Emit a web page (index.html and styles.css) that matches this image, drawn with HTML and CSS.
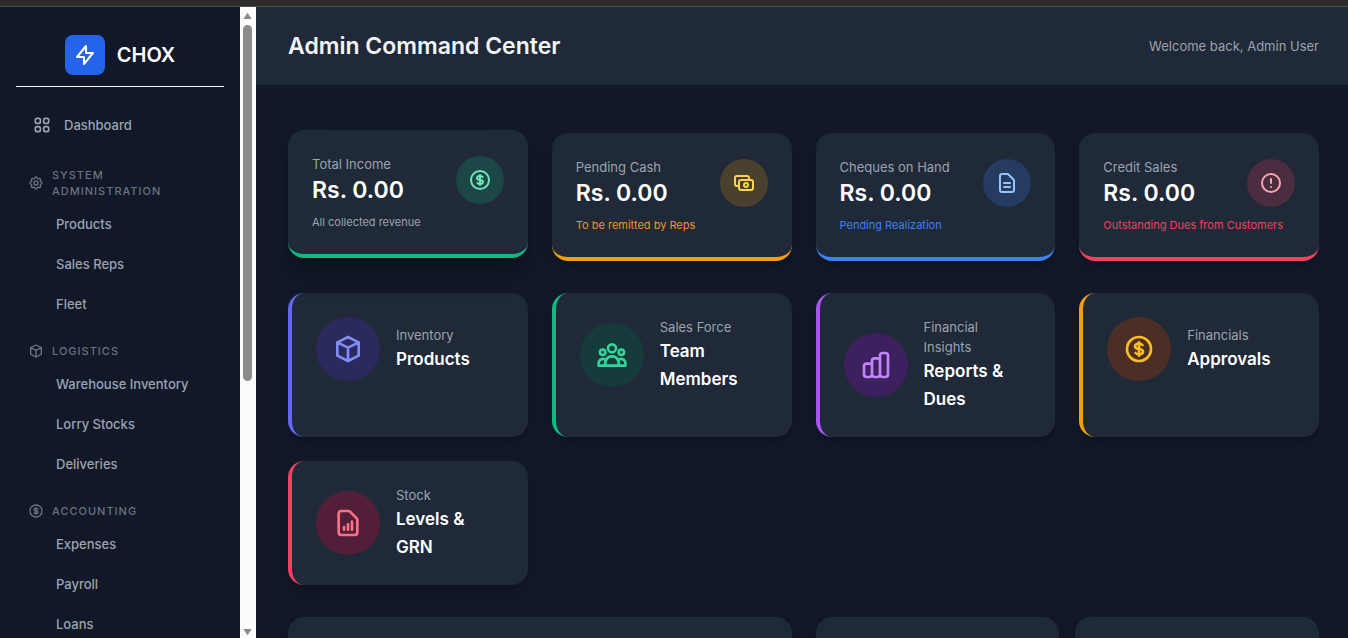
FILE: index.html
```html
<!DOCTYPE html>
<html lang="en">
<head>
<meta charset="utf-8">
<meta name="viewport" content="width=device-width, initial-scale=1">
<title>Admin Command Center</title>
<link rel="stylesheet" href="styles.css">
</head>
<body>
<svg class="sprite" aria-hidden="true">
  <symbol id="bolt" viewBox="0 0 24 24"><path d="M13 10V3L4 14h7v7l9-11h-7z"/></symbol>
  <symbol id="grid" viewBox="0 0 24 24"><rect x="4" y="4" width="6" height="6" rx="2"/><rect x="14" y="4" width="6" height="6" rx="2"/><rect x="4" y="14" width="6" height="6" rx="2"/><rect x="14" y="14" width="6" height="6" rx="2"/></symbol>
  <symbol id="cog" viewBox="0 0 24 24"><path d="M10.325 4.317c.426-1.756 2.924-1.756 3.35 0a1.724 1.724 0 002.573 1.066c1.543-.94 3.31.826 2.37 2.37a1.724 1.724 0 001.065 2.572c1.756.426 1.756 2.924 0 3.35a1.724 1.724 0 00-1.066 2.573c.94 1.543-.826 3.31-2.37 2.37a1.724 1.724 0 00-2.572 1.065c-.426 1.756-2.924 1.756-3.35 0a1.724 1.724 0 00-2.573-1.066c-1.543.94-3.31-.826-2.37-2.37a1.724 1.724 0 00-1.065-2.572c-1.756-.426-1.756-2.924 0-3.35a1.724 1.724 0 001.066-2.573c-.94-1.543.826-3.31 2.37-2.37.996.608 2.296.07 2.572-1.065z"/><circle cx="12" cy="12" r="3"/></symbol>
  <symbol id="cube" viewBox="0 0 24 24"><path d="M20 7l-8-4-8 4m16 0l-8 4m8-4v10l-8 4m0-10L4 7m8 4v10M4 7v10l8 4"/></symbol>
  <symbol id="dollar" viewBox="0 0 24 24"><path d="M12 8c-1.657 0-3 .895-3 2s1.343 2 3 2 3 .895 3 2-1.343 2-3 2m0-8c1.11 0 2.08.402 2.599 1M12 8V7m0 1v8m0 0v1m0-1c-1.11 0-2.08-.402-2.599-1M21 12a9 9 0 11-18 0 9 9 0 0118 0z"/></symbol>
  <symbol id="cash" viewBox="0 0 24 24"><path d="M17 9V7a2 2 0 00-2-2H5a2 2 0 00-2 2v6a2 2 0 002 2h2m2 4h10a2 2 0 002-2v-6a2 2 0 00-2-2H9a2 2 0 00-2 2v6a2 2 0 002 2zm7-5a2 2 0 11-4 0 2 2 0 014 0z"/></symbol>
  <symbol id="document" viewBox="0 0 24 24"><path d="M9 12h6m-6 4h6m2 5H7a2 2 0 01-2-2V5a2 2 0 012-2h5.586a1 1 0 01.707.293l5.414 5.414a1 1 0 01.293.707V19a2 2 0 01-2 2z"/></symbol>
  <symbol id="alert" viewBox="0 0 24 24"><path d="M12 8v4m0 4h.01M21 12a9 9 0 11-18 0 9 9 0 0118 0z"/></symbol>
  <symbol id="team" viewBox="0 0 24 24"><path d="M17 20h5v-2a3 3 0 00-5.356-1.857M17 20H7m10 0v-2c0-.656-.126-1.283-.356-1.857M7 20H2v-2a3 3 0 015.356-1.857M7 20v-2c0-.656.126-1.283.356-1.857m0 0a5.002 5.002 0 019.288 0M15 7a3 3 0 11-6 0 3 3 0 016 0zm6 3a2 2 0 11-4 0 2 2 0 014 0zM7 10a2 2 0 11-4 0 2 2 0 014 0z"/></symbol>
  <symbol id="bars" viewBox="0 0 24 24"><path d="M9 19v-6a2 2 0 00-2-2H5a2 2 0 00-2 2v6a2 2 0 002 2h2a2 2 0 002-2zm0 0V9a2 2 0 012-2h2a2 2 0 012 2v10m-6 0a2 2 0 002 2h2a2 2 0 002-2m0 0V5a2 2 0 012-2h2a2 2 0 012 2v14a2 2 0 01-2 2h-2a2 2 0 01-2-2z"/></symbol>
  <symbol id="report" viewBox="0 0 24 24"><path d="M9 17v-2m3 2v-4m3 4v-6m2 10H7a2 2 0 01-2-2V5a2 2 0 012-2h5.586a1 1 0 01.707.293l5.414 5.414a1 1 0 01.293.707V19a2 2 0 01-2 2z"/></symbol>
</svg>
<div class="window-edge"></div>
<div class="app">
  <aside class="sidebar">
    <div class="sidebar-content">
      <a class="brand" href="#"><span class="brand-mark"><svg class="icon icon-md"><use href="#bolt"/></svg></span><span>CHOX</span></a>
      <nav class="nav">
        <a class="nav-link nav-home" href="#"><svg class="icon icon-sm"><use href="#grid"/></svg>Dashboard</a>
        <section class="nav-group">
          <h2 class="nav-title"><svg class="icon icon-xs"><use href="#cog"/></svg><span>System Administration</span></h2>
          <a class="nav-link" href="#">Products</a>
          <a class="nav-link" href="#">Sales Reps</a>
          <a class="nav-link" href="#">Fleet</a>
        </section>
        <section class="nav-group">
          <h2 class="nav-title"><svg class="icon icon-xs"><use href="#cube"/></svg><span>Logistics</span></h2>
          <a class="nav-link" href="#">Warehouse Inventory</a>
          <a class="nav-link" href="#">Lorry Stocks</a>
          <a class="nav-link" href="#">Deliveries</a>
        </section>
        <section class="nav-group">
          <h2 class="nav-title"><svg class="icon icon-xs"><use href="#dollar"/></svg><span>Accounting</span></h2>
          <a class="nav-link" href="#">Expenses</a>
          <a class="nav-link" href="#">Payroll</a>
          <a class="nav-link" href="#">Loans</a>
        </section>
      </nav>
    </div>
    <div class="scrollbar" aria-hidden="true">
      <svg class="scroll-arrow" viewBox="0 0 9 8"><path d="M1 6.500h7L4.500 1.500z"/></svg>
      <div class="scroll-track"><div class="scroll-thumb"></div></div>
      <svg class="scroll-arrow" viewBox="0 0 9 8"><path d="M1 1.500h7L4.500 6.500z"/></svg>
    </div>
  </aside>
  <main class="main">
    <header class="page-header">
      <h1 class="page-title">Admin Command Center</h1>
      <p class="welcome">Welcome back, Admin User</p>
    </header>
    <div class="content">
      <section class="cards">
        <article class="card stat green raised">
          <div class="stat-row"><div><p class="label">Total Income</p><p class="amount">Rs. 0.00</p></div><span class="badge"><svg class="icon icon-md"><use href="#dollar"/></svg></span></div>
          <p class="note">All collected revenue</p>
        </article>
        <article class="card stat amber">
          <div class="stat-row"><div><p class="label">Pending Cash</p><p class="amount">Rs. 0.00</p></div><span class="badge"><svg class="icon icon-md"><use href="#cash"/></svg></span></div>
          <p class="note">To be remitted by Reps</p>
        </article>
        <article class="card stat blue">
          <div class="stat-row"><div><p class="label">Cheques on Hand</p><p class="amount">Rs. 0.00</p></div><span class="badge"><svg class="icon icon-md"><use href="#document"/></svg></span></div>
          <p class="note">Pending Realization</p>
        </article>
        <article class="card stat rose">
          <div class="stat-row"><div><p class="label">Credit Sales</p><p class="amount">Rs. 0.00</p></div><span class="badge"><svg class="icon icon-md"><use href="#alert"/></svg></span></div>
          <p class="note">Outstanding Dues from Customers</p>
        </article>
      </section>
      <section class="cards">
        <a class="card link indigo-link" href="#"><span class="link-row"><span class="badge badge-lg"><svg class="icon icon-lg"><use href="#cube"/></svg></span><span class="link-text"><span class="label">Inventory</span><span class="link-name">Products</span></span></span></a>
        <a class="card link green-link" href="#"><span class="link-row"><span class="badge badge-lg"><svg class="icon icon-lg"><use href="#team"/></svg></span><span class="link-text"><span class="label">Sales Force</span><span class="link-name">Team Members</span></span></span></a>
        <a class="card link purple-link" href="#"><span class="link-row"><span class="badge badge-lg"><svg class="icon icon-lg"><use href="#bars"/></svg></span><span class="link-text"><span class="label">Financial Insights</span><span class="link-name">Reports &amp; Dues</span></span></span></a>
        <a class="card link amber-link" href="#"><span class="link-row"><span class="badge badge-lg"><svg class="icon icon-lg"><use href="#dollar"/></svg></span><span class="link-text"><span class="label">Financials</span><span class="link-name">Approvals</span></span></span></a>
        <a class="card link rose-link" href="#"><span class="link-row"><span class="badge badge-lg"><svg class="icon icon-lg"><use href="#report"/></svg></span><span class="link-text"><span class="label">Stock</span><span class="link-name">Levels &amp; GRN</span></span></span></a>
      </section>
      <section class="panels">
        <div class="card panel"></div>
        <div class="panel-pair"><div class="card panel"></div><div class="card panel"></div></div>
      </section>
    </div>
  </main>
</div>
</body>
</html>
```
FILE: styles.css
```css
* { box-sizing: border-box; }
body {
  margin: 0;
  height: 100vh;
  display: flex;
  flex-direction: column;
  overflow: hidden;
  background: #111827;
  color: #fff;
  font: 400 13px/20px Inter, "Open Sans", sans-serif;
}
h1, h2, p { margin: 0; }
a { color: inherit; text-decoration: none; }
.sprite { display: none; }
.icon { flex: none; fill: none; stroke: currentColor; stroke-width: 2; stroke-linecap: round; stroke-linejoin: round; }
.icon-xs { width: 16px; height: 16px; }
.icon-sm { width: 20px; height: 20px; }
.icon-md { width: 24px; height: 24px; }
.icon-lg { width: 32px; height: 32px; }

.window-edge { flex: none; height: 7px; background: #2d2c2b; border-bottom: 1px solid #4d4d4d; }
.app { flex: 1; min-height: 0; display: flex; }

.sidebar { flex: none; width: 256px; display: flex; overflow: hidden; }
.sidebar-content { flex: 1; overflow: hidden; padding: 0 16px; }
.brand {
  display: flex; align-items: center; justify-content: center; gap: 12px;
  padding: 28px 0 11px;
  border-bottom: 1px solid #f3f4f6;
  font-size: 20px; font-weight: 600; line-height: 28px;
}
.brand-mark { display: flex; align-items: center; justify-content: center; width: 40px; height: 40px; border-radius: 8px; background: #2563eb; }
.nav { padding-top: 20px; }
.nav-link { display: block; margin-bottom: 4px; padding: 8px 0 8px 40px; color: #9ca3af; font-weight: 500; }
.nav-home { display: flex; align-items: center; gap: 12px; padding-left: 16px; }
.nav-group { padding-top: 16px; }
.nav-group + .nav-group { padding-top: 13px; }
.nav-title {
  display: flex; align-items: center; gap: 8px;
  padding: 4px 28px 7px 12px;
  color: #6b7280;
  font-size: 11px; font-weight: 500; line-height: 16px; letter-spacing: 1px; text-transform: uppercase;
}

.scrollbar { flex: none; width: 16px; display: flex; flex-direction: column; align-items: center; padding: 5px 1px 2px 0; background: #fcfcfc; }
.scroll-arrow { flex: none; width: 9px; height: 8px; fill: #8b8b8b; stroke: #8b8b8b; stroke-linejoin: round; }
.scroll-track { flex: 1; padding: 5px 0; }
.scroll-thumb { width: 9px; height: 59.5%; border-radius: 5px; background: #8b8b8b; }

.main { flex: 1; min-width: 0; overflow: hidden; }
.page-header { display: flex; align-items: center; justify-content: space-between; padding: 24px 29px 24px 32px; background: #1f2937; }
.page-title { font-size: 23px; font-weight: 600; line-height: 30px; color: #f3f4f6; }
.welcome { color: #9ca3af; }
.content { display: flex; flex-direction: column; gap: 32px; padding: 48px 29px 32px 32px; }
.cards { display: grid; grid-template-columns: repeat(4, minmax(0, 1fr)); gap: 24px; }
.card { border-radius: 16px; background: #1f2937; box-shadow: 0 10px 15px -3px rgba(0, 0, 0, .14), 0 4px 6px -4px rgba(0, 0, 0, .12); }
.label { display: block; color: #9ca3af; }
.badge { flex: none; display: flex; align-items: center; justify-content: center; width: 48px; height: 48px; border-radius: 50%; }
.badge-lg { width: 64px; height: 64px; }

.stat { padding: 24px; border-bottom: 4px solid; }
.stat-row { display: flex; align-items: center; justify-content: space-between; }
.amount { color: #fff; font-size: 23px; font-weight: 600; line-height: 32px; }
.note { margin-top: 8px; font-size: 11px; line-height: 16px; white-space: nowrap; }
.raised { transform: translateY(-3px); box-shadow: 0 20px 25px -5px rgba(0, 0, 0, .25), 0 8px 10px -6px rgba(0, 0, 0, .2); }
.green { border-color: #10b981; }
.green .badge { background: #1c4746; color: #6ee7b7; }
.green .note { color: #9ca3af; }
.amber { border-color: #f59e0b; }
.amber .badge { background: #4a402e; color: #fcd34d; }
.amber .note { color: #f5931e; }
.blue { border-color: #3b82f6; }
.blue .badge { background: #253b5f; color: #93c5fd; }
.blue .note { color: #3b82f6; }
.rose { border-color: #f43f5e; }
.rose .badge { background: #4a2d3f; color: #fda4af; }
.rose .note { color: #f43f5e; }

.link { padding: 24px; border-left: 4px solid; }
.link-row { display: flex; align-items: center; gap: 16px; }
.link-text { flex: 1; min-width: 0; }
.link .label { max-width: 96px; }
.link-name { display: block; color: #fff; font-size: 17px; font-weight: 600; line-height: 28px; }
.indigo-link { border-color: #6366f1; }
.indigo-link .badge { background: #2a2b5c; color: #818cf8; }
.green-link { border-color: #10b981; }
.green-link .badge { background: #153b3a; color: #34d399; }
.purple-link { border-color: #a855f7; }
.purple-link .badge { background: #3d215f; color: #c084fc; }
.amber-link { border-color: #f59e0b; }
.amber-link .badge { background: #4b2e25; color: #fbbf24; }
.rose-link { border-color: #f43f5e; }
.rose-link .badge { background: #531e38; color: #fb7185; }

.panels { display: grid; grid-template-columns: 1fr 1fr; gap: 24px; }
.panel-pair { display: grid; grid-template-columns: 1fr 1fr; gap: 16px; }
.panel { min-height: 128px; }
```
